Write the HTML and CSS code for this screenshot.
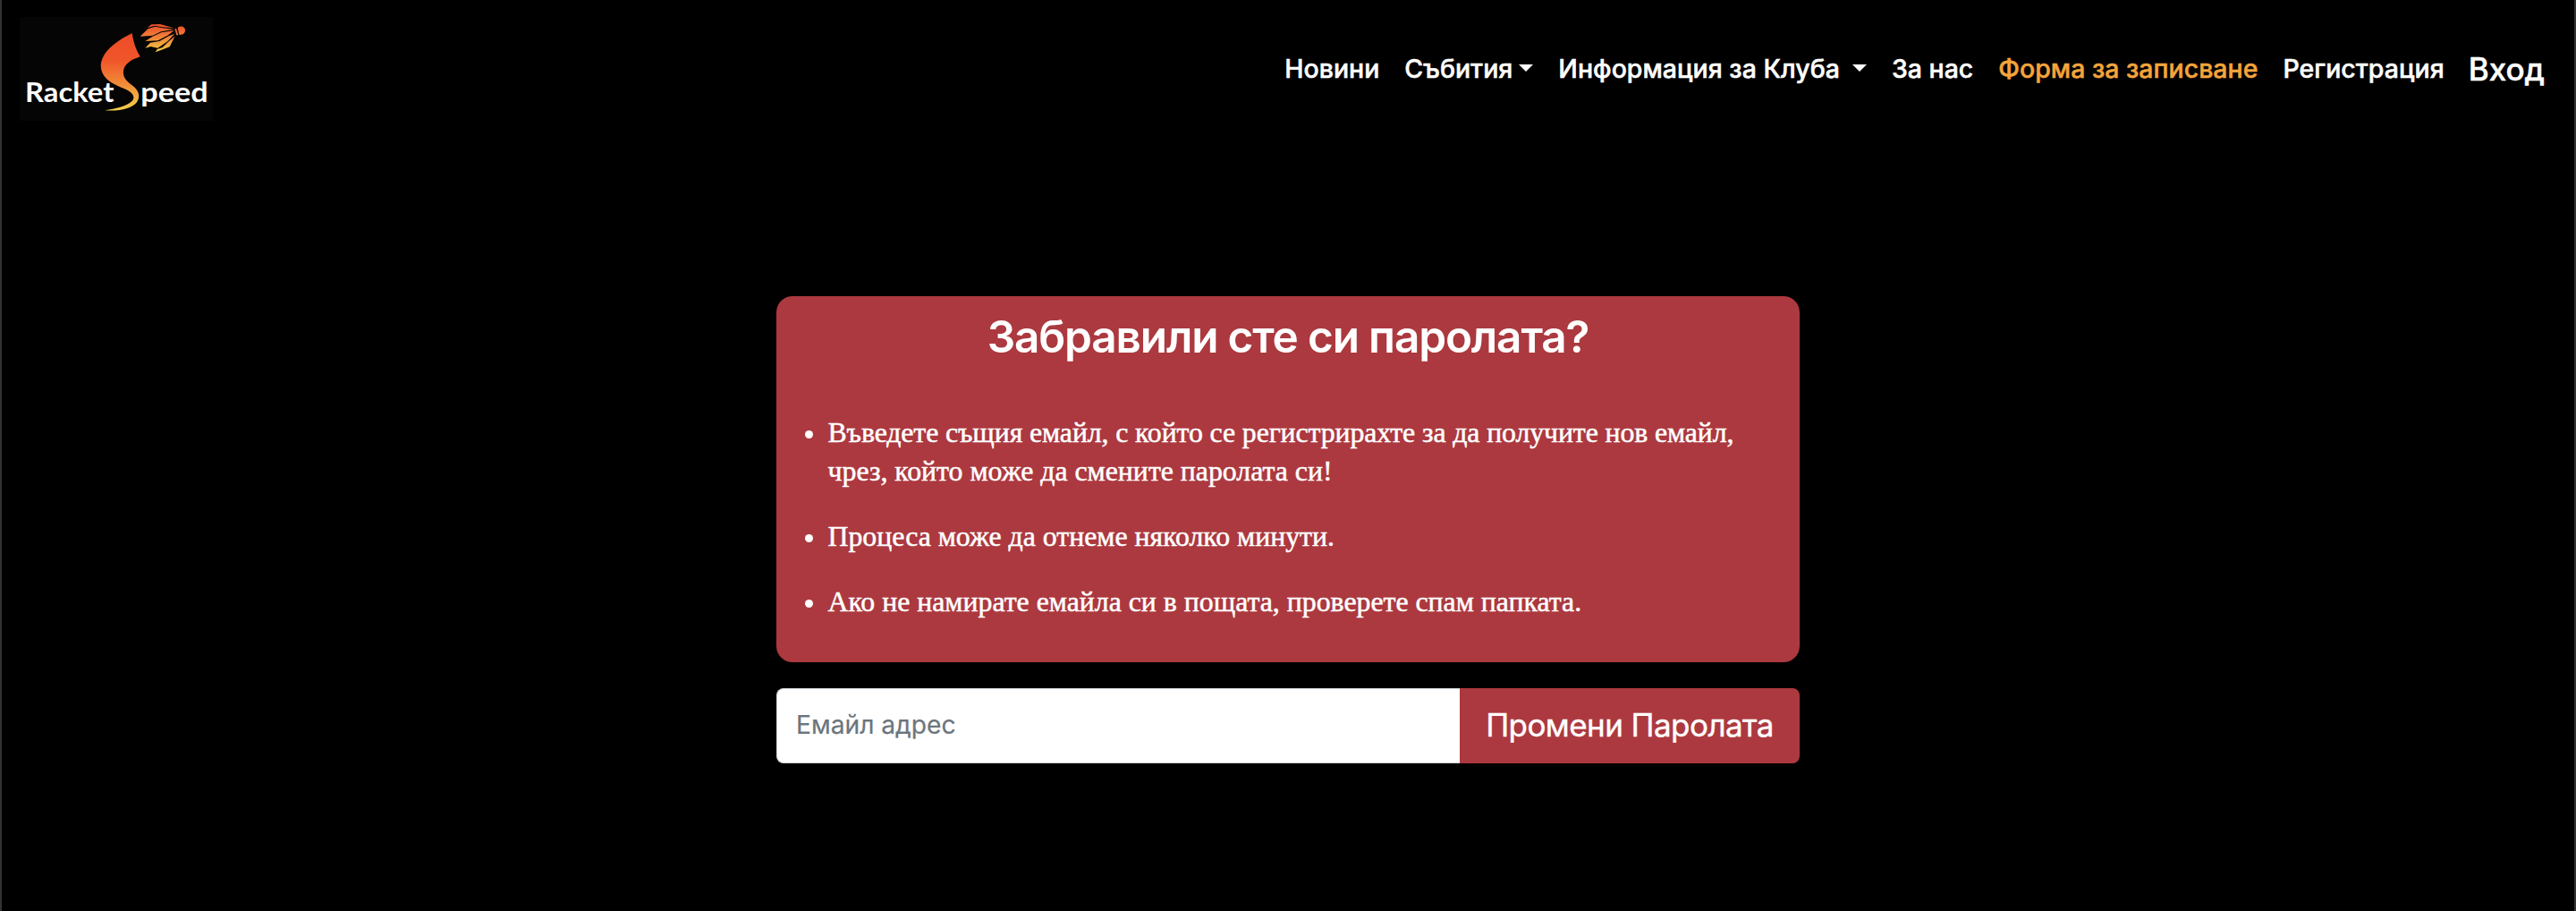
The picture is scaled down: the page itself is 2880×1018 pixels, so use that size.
FILE: index.html
```html
<!DOCTYPE html>
<html lang="bg">
<head>
<meta charset="utf-8">
<title>RacketSpeed</title>
<link rel="stylesheet" href="styles.css">
</head>
<body>
<header class="navbar">
  <a class="brand" aria-label="RacketSpeed">
    <svg class="logo" viewBox="66 57 648 348">
      <defs>
        <linearGradient id="swoosh" x1="0" y1="112" x2="0" y2="370" gradientUnits="userSpaceOnUse">
          <stop offset="0" stop-color="#ee4b27"/>
          <stop offset=".35" stop-color="#f0552a"/>
          <stop offset=".65" stop-color="#f08a38"/>
          <stop offset="1" stop-color="#f3d04a"/>
        </linearGradient>
        <linearGradient id="feather" x1="0" y1="82" x2="0" y2="175" gradientUnits="userSpaceOnUse">
          <stop offset="0" stop-color="#e9502a"/>
          <stop offset=".5" stop-color="#f2863a"/>
          <stop offset="1" stop-color="#f3cf3f"/>
        </linearGradient>
      </defs>
      <path fill="url(#swoosh)" d="M443 112C400 132 341 170 338 220C340 266 380 282 418 298C446 310 456 326 442 340C422 358 388 364 352 370C400 374 440 364 458 344C474 322 464 300 442 285C417 268 408 250 417 226C428 206 450 197 470 190C455 165 447 140 443 112Z"/>
      <g fill="url(#feather)">
        <path d="M494 93L508 82L537 81L583 94L545 91L519 86Z"/>
        <path d="M470 122L496 97L520 89L545 94L583 98L540 106L512 119Z"/>
        <path d="M487 138L512 122L541 109L584 102L564 118L530 136Z"/>
        <path d="M487 161L504 143L535 138L566 121L586 113L562 139L529 161L506 156Z"/>
        <path d="M521 175L527 165L545 159L566 139L587 121L569 157L542 167Z"/>
        <path d="M586 97L591 95L598 118L592 118Z"/>
        <path d="M596 93C608 84 621 91 621 101C621 112 613 117 601 116Z"/>
      </g>
      <text class="logo-text" x="84" y="342" textLength="298" lengthAdjust="spacingAndGlyphs">Racket</text>
      <text class="logo-text" x="472" y="342" textLength="226" lengthAdjust="spacingAndGlyphs">peed</text>
    </svg>
  </a>
  <nav class="menu">
    <a>Новини</a>
    <a class="dropdown">Събития<i class="caret"></i></a>
    <a class="dropdown wide">Информация за Клуба<i class="caret"></i></a>
    <a>За нас</a>
    <a class="accent">Форма за записване</a>
    <a>Регистрация</a>
    <a class="login">Вход</a>
  </nav>
</header>
<main class="reset">
  <section class="card">
    <h1>Забравили сте си паролата?</h1>
    <ul>
      <li class="long"><span>Въведете същия емайл, с който се регистрирахте за да получите нов емайл,</span></li>
      <li class="continued"><span>чрез, който може да смените паролата си!</span></li>
      <li><span>Процеса може да отнеме няколко минути.</span></li>
      <li><span>Ако не намирате емайла си в пощата, проверете спам папката.</span></li>
    </ul>
  </section>
  <form class="group">
    <input type="email" placeholder="Емайл адрес">
    <button type="button">Промени Паролата</button>
  </form>
</main>
</body>
</html>
```
FILE: styles.css
```css
* { box-sizing: border-box; }

body {
  margin: 0;
  height: 1018px;
  overflow: hidden;
  background: #000;
  border: solid #333;
  border-width: 0 2px;
  color: #fff;
  font-family: Inter, "Liberation Sans", sans-serif;
}

.navbar {
  display: flex;
  align-items: center;
  justify-content: space-between;
  height: 154px;
  padding: 0 33px 0 20px;
}

.brand, .logo { display: block; width: 216px; height: 116px; }
.logo { background: #050505; }
.logo-text { fill: #fff; font: 700 91px Lato, sans-serif; }

.menu {
  display: flex;
  align-items: center;
  gap: 28px;
  font-size: 28.5px;
  font-weight: 500;
  line-height: 42px;
  white-space: nowrap;
  -webkit-text-stroke: .5px;
}
.dropdown { display: flex; align-items: center; gap: 7px; }
.dropdown.wide { gap: 14px; }
.caret {
  margin-bottom: 2px;
  border: 8px solid transparent;
  border-top-color: #fff;
  border-bottom: 0;
}
.accent { color: #f4a53a; }
.login { margin-left: -1px; font-size: 35px; }

.reset { width: 1144px; margin: 177px auto 0; }

.card {
  height: 409px;
  padding: 15px 32px 0;
  border-radius: 18px;
  background: #ac393f;
}
h1 {
  margin: 0 0 56px;
  font-size: 49.5px;
  font-weight: 600;
  line-height: 60px;
  letter-spacing: -1.16px;
  text-align: center;
}
ul {
  margin: 0;
  padding: 0;
  list-style: none;
  font: 31.8px/43px "Liberation Serif", serif;
  white-space: nowrap;
  -webkit-text-stroke: .5px;
}
li { display: flex; gap: 16.5px; margin-bottom: 30px; }
li::before {
  content: "";
  width: 9px;
  height: 9px;
  margin-top: 19px;
  border-radius: 50%;
  background: #fff;
}
.long { margin-bottom: 0; letter-spacing: -.1px; }
.continued::before { background: none; }

.group { display: flex; height: 84px; margin-top: 29px; }
input {
  width: 764px;
  padding: 0 21px 2px;
  border: 1px solid #ced4da;
  border-right: 0;
  border-radius: 8px 0 0 8px;
  background: #fff;
  font: 28.2px Inter, sans-serif;
  -webkit-text-stroke: .2px;
}
input::placeholder { color: #6c757d; opacity: 1; }
button {
  flex: 1;
  padding: 0 0 2px;
  border: 0;
  border-radius: 0 8px 8px 0;
  background: #ac393f;
  color: #fff;
  font: 35px Inter, sans-serif;
  letter-spacing: -.57px;
  -webkit-text-stroke: .4px;
}
```
